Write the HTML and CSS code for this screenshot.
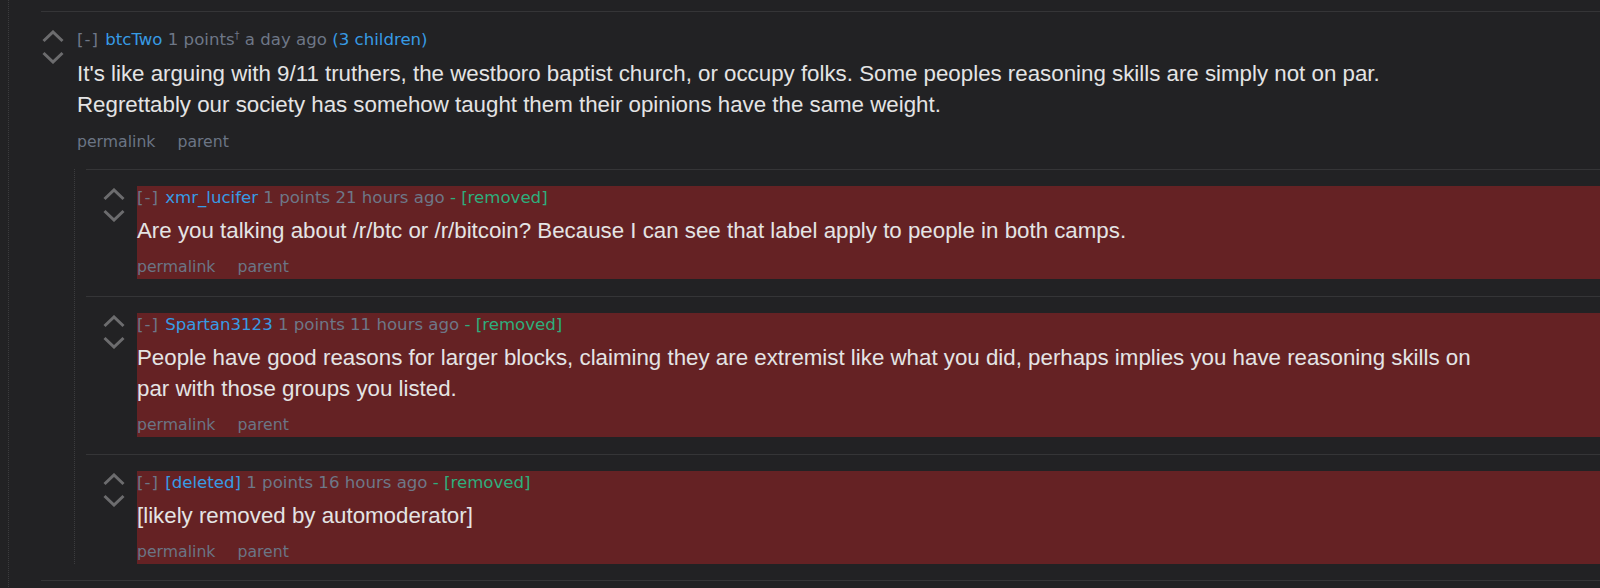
FILE: index.html
```html
<!DOCTYPE html>
<html lang="en">
<head>
<meta charset="utf-8">
<title>Comments</title>
<link rel="stylesheet" href="styles.css">
</head>
<body>
<div class="thread">
  <div class="comment top">
    <div class="row">
      <div class="vote">
        <svg width="24" height="34" viewBox="0 0 24 34"><polyline points="2.5,11 12,2 21.5,11"/><polyline points="2.5,23 12,32 21.5,23"/></svg>
      </div>
      <div class="entry">
        <p class="tagline"><span class="expand">[-]</span> <a class="author">btcTwo</a> <span class="meta">1 points<sup>†</sup> a day ago</span> <a class="author">(3 children)</a></p>
        <div class="md">It's like arguing with 9/11 truthers, the westboro baptist church, or occupy folks. Some peoples reasoning skills are simply not on par. Regrettably our society has somehow taught them their opinions have the same weight.</div>
        <ul class="buttons"><li>permalink</li><li>parent</li></ul>
      </div>
    </div>
    <div class="children">
      <div class="comment child">
        <div class="row">
          <div class="vote">
            <svg width="24" height="34" viewBox="0 0 24 34"><polyline points="2.5,11 12,2 21.5,11"/><polyline points="2.5,23 12,32 21.5,23"/></svg>
          </div>
          <div class="entry removed">
            <p class="tagline"><span class="expand">[-]</span> <a class="author">xmr_lucifer</a> <span class="meta">1 points 21 hours ago</span> <span class="status">- [removed]</span></p>
            <div class="md">Are you talking about /r/btc or /r/bitcoin? Because I can see that label apply to people in both camps.</div>
            <ul class="buttons"><li>permalink</li><li>parent</li></ul>
          </div>
        </div>
      </div>
      <div class="comment child">
        <div class="row">
          <div class="vote">
            <svg width="24" height="34" viewBox="0 0 24 34"><polyline points="2.5,11 12,2 21.5,11"/><polyline points="2.5,23 12,32 21.5,23"/></svg>
          </div>
          <div class="entry removed">
            <p class="tagline"><span class="expand">[-]</span> <a class="author">Spartan3123</a> <span class="meta">1 points 11 hours ago</span> <span class="status">- [removed]</span></p>
            <div class="md">People have good reasons for larger blocks, claiming they are extremist like what you did, perhaps implies you have reasoning skills on par with those groups you listed.</div>
            <ul class="buttons"><li>permalink</li><li>parent</li></ul>
          </div>
        </div>
      </div>
      <div class="comment child">
        <div class="row">
          <div class="vote">
            <svg width="24" height="34" viewBox="0 0 24 34"><polyline points="2.5,11 12,2 21.5,11"/><polyline points="2.5,23 12,32 21.5,23"/></svg>
          </div>
          <div class="entry removed">
            <p class="tagline"><span class="expand">[-]</span> <a class="author">[deleted]</a> <span class="meta">1 points 16 hours ago</span> <span class="status">- [removed]</span></p>
            <div class="md">[likely removed by automoderator]</div>
            <ul class="buttons"><li>permalink</li><li>parent</li></ul>
          </div>
        </div>
      </div>
    </div>
  </div>
  <div class="comment next"></div>
</div>
</body>
</html>
```

FILE: styles.css
```css
html, body {
  margin: 0;
  padding: 0;
  background: #222224;
  height: 100%;
  overflow: hidden;
}

.thread {
  margin-left: 8px;
  border-left: 1px dotted #3c3c3e;
  padding-top: 11px;
  min-height: 100%;
  box-sizing: border-box;
}

.comment {
  margin-left: 32px;
  border-top: 1px solid #353537;
  padding-top: 16px;
  padding-bottom: 16px;
}

.comment.next {
  padding: 0;
  height: 20px;
}

.row {
  display: flex;
  align-items: flex-start;
}

.vote {
  flex: 0 0 36px;
  padding-top: 2px;
}

.vote svg {
  display: block;
}

.vote polyline {
  fill: none;
  stroke: #6c6c6e;
  stroke-width: 3;
  stroke-linecap: butt;
  stroke-linejoin: miter;
}

.entry {
  flex: 1 1 auto;
  padding: 3px 0 3px;
  min-width: 0;
}

.entry.removed {
  background: #652224;
}

.tagline {
  margin: 0;
  font-family: "DejaVu Sans", Verdana, sans-serif;
  font-size: 16.6px;
  line-height: 18px;
  color: #6e7787;
  white-space: nowrap;
}

.expand {
  letter-spacing: 1px;
  margin-right: 1px;
}

.tagline sup {
  font-size: 10px;
  line-height: 0;
  vertical-align: 6px;
}

.author {
  color: #379be4;
  text-decoration: none;
}

.status {
  color: #2eae7c;
}

.md {
  margin-top: 8px;
  max-width: 1350px;
  font-family: "Liberation Sans", Arial, Helvetica, sans-serif;
  font-size: 22.3px;
  line-height: 31px;
  color: #e4e4e4;
}

.top > .row .md {
  margin-top: 9px;
}

.buttons {
  list-style: none;
  margin: 12px 0 0;
  padding: 0;
  display: flex;
  gap: 22px;
  font-family: "DejaVu Sans", Verdana, sans-serif;
  font-size: 15.7px;
  line-height: 18px;
  color: #6b7585;
}

.top > .row .buttons {
  margin-top: 13px;
}

.children {
  margin-left: 33px;
  margin-top: 15px;
  border-left: 1px dotted #3c3c3e;
}

.comment.child {
  margin-left: 11px;
  padding: 16px 0 0 16px;
}

.comment.child + .comment.child {
  margin-top: 17px;
}

.comment.child .vote {
  flex-basis: 35px;
  padding-top: 2px;
}
```
